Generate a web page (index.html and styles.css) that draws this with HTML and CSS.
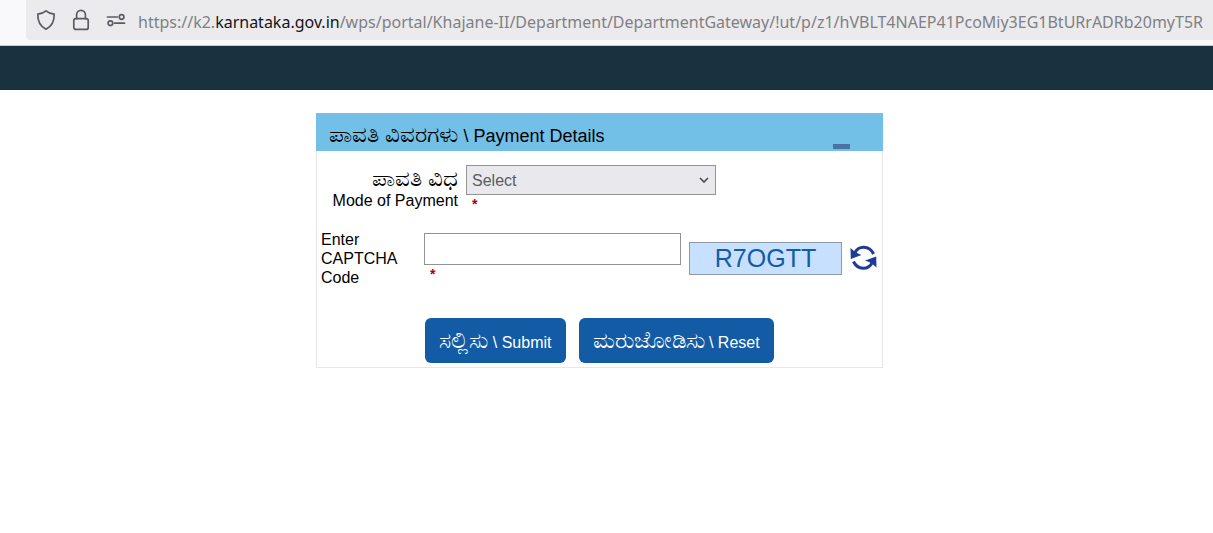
FILE: index.html
```
<!DOCTYPE html>
<html lang="kn">
<head>
  <meta charset="UTF-8">
  <meta name="viewport" content="width=device-width, initial-scale=1.0">
  <title>Khajane-II</title>
  <link rel="stylesheet" href="styles.css">
</head>
<body>
  <div class="toolbar">
    <div class="urlbar">
      <svg class="icon" viewBox="0 0 20 22">
        <path d="M10 1.8 C7.6 3.8 4.8 4.8 1.8 5.2 C1.6 11.8 4.6 17.4 10 20.2 C15.4 17.4 18.4 11.8 18.2 5.2 C15.2 4.8 12.4 3.8 10 1.8 Z"/>
      </svg>
      <svg class="icon" viewBox="0 0 20 22">
        <rect x="2.8" y="9.6" width="14.4" height="10.8" rx="2"/>
        <path d="M5.6 9.6 V5.8 A4.4 4.4 0 0 1 14.4 5.8 V9.6"/>
      </svg>
      <svg class="icon" viewBox="0 0 20 22">
        <path d="M1.5 8 H11.5 M8.5 14.2 H18.5"/>
        <circle cx="15.6" cy="8" r="2.3"/>
        <circle cx="4.4" cy="14.2" r="2.3"/>
      </svg>
      <div class="url">https://k2.<span class="domain">karnataka.gov.in</span>/wps/portal/Khajane-II/Department/DepartmentGateway/!ut/p/z1/hVBLT4NAEP41PcoMiy3EG1BtURrADRb20myT5R</div>
    </div>
  </div>
  <div class="banner"></div>

  <main class="content">
    <form class="panel">
      <div class="panel-header">
        <h2><span class="kn">ಪಾವತಿ ವಿವರಗಳು</span> \ Payment Details</h2>
        <button type="button" class="collapse" aria-label="Collapse"></button>
      </div>
      <div class="row">
        <label class="mode-label" for="mode"><span class="kn">ಪಾವತಿ ವಿಧ</span><br>Mode of Payment</label>
        <div class="field">
          <div class="select-box">
            <select id="mode">
              <option>Select</option>
            </select>
            <svg class="chevron" viewBox="0 0 10 6"><path d="M1 1 L5 5 L9 1"/></svg>
          </div>
          <span class="required">*</span>
        </div>
      </div>
      <div class="row captcha-row">
        <label class="captcha-label" for="captcha">Enter CAPTCHA Code</label>
        <div class="field captcha-field">
          <input type="text" id="captcha">
          <span class="required">*</span>
        </div>
        <div class="captcha-code">R7OGTT</div>
        <button type="button" class="refresh" aria-label="Refresh">
          <svg viewBox="0 0 27 26">
            <path class="arc" d="M5 7.5 C8.5 0.8 19 -0.2 23.6 9"/>
            <path class="arc" d="M22 18 C18.5 24.7 8 25.7 3.4 16.5"/>
            <path class="head" d="M0.5 3 L0.8 14 L11.5 10 L8 8.4 L4 6 Z"/>
            <path class="head" d="M26.5 22.5 L26.2 11.5 L15 15.5 L19 17.1 L23 19.5 Z"/>
          </svg>
        </button>
      </div>
      <div class="actions">
        <button type="submit" class="btn"><span class="kn">ಸಲ್ಲಿಸು</span> \ Submit</button>
        <button type="reset" class="btn"><span class="kn">ಮರುಜೋಡಿಸು</span> \ Reset</button>
      </div>
    </form>
  </main>
</body>
</html>
```

FILE: styles.css
```
* {
  margin: 0;
  padding: 0;
  box-sizing: border-box;
}
body {
  background: #fff;
  color: #000;
  font-family: "Liberation Sans", Arial, "Noto Sans", sans-serif;
  font-size: 16px;
}
.kn {
  font-size: 23px;
  line-height: 0;
}
.toolbar {
  padding: 0 0 5px 26px;
  background: #f9f9fb;
  border-bottom: 1px solid #c9c9d0;
}
.urlbar {
  display: flex;
  align-items: center;
  gap: 15px;
  height: 40px;
  padding-left: 10px;
  background: #ebebed;
  border-radius: 0 0 0 4px;
  overflow: hidden;
}
.icon {
  flex: none;
  width: 20px;
  height: 22px;
  fill: none;
  stroke: #5b5b66;
  stroke-width: 1.7;
  stroke-linejoin: round;
  stroke-linecap: round;
}
.url {
  margin-left: -3px;
  padding-top: 4px;
  color: #808084;
  font-family: "Noto Sans", "Open Sans", sans-serif;
  font-size: 16px;
  white-space: nowrap;
}
.domain {
  color: #15141a;
}
.banner {
  height: 44px;
  background: #18323f;
}
.content {
  padding: 23px 14px 0 0;
}
.panel {
  max-width: 567px;
  margin: 0 auto;
  padding-bottom: 4px;
  border: 1px solid #e7e7e7;
  border-top: none;
}
.panel-header {
  display: flex;
  justify-content: space-between;
  align-items: flex-end;
  height: 38px;
  margin: 0 -1px;
  padding: 0 33px 2px 13px;
  background: #72c0e8;
}
.panel-header h2 {
  padding-bottom: 3px;
  font-size: 18px;
  font-weight: normal;
  line-height: 20px;
}
.collapse {
  width: 17px;
  height: 5px;
  border: none;
  background: #4a72a8;
}
.row {
  display: flex;
  padding: 14px 5px 0 4px;
}
.mode-label {
  width: 137px;
  margin-right: 8px;
  padding-top: 6px;
  text-align: right;
  line-height: 20px;
}
.field {
  display: flex;
  flex-direction: column;
}
.select-box {
  position: relative;
  width: 250px;
}
.select-box select {
  display: block;
  width: 100%;
  height: 30px;
  padding: 0 5px;
  border: 1px solid #939393;
  border-radius: 0;
  background: #e9e9ed;
  color: #5b5b5f;
  font: inherit;
  appearance: none;
}
.chevron {
  position: absolute;
  top: 12px;
  right: 7px;
  width: 10px;
  height: 6px;
  fill: none;
  stroke: #4a4a4f;
  stroke-width: 1.6;
  pointer-events: none;
}
.required {
  padding-left: 6px;
  color: #b00000;
  font-size: 14px;
  font-weight: bold;
  line-height: 18px;
}
.captcha-row {
  padding-top: 17px;
}
.captcha-label {
  width: 88px;
  margin-right: 15px;
  padding-right: 8px;
  line-height: 19px;
}
.captcha-field {
  flex: 1;
  padding-top: 3px;
}
.captcha-field input {
  width: 100%;
  height: 32px;
  padding: 0 6px;
  border: 1px solid #939393;
  font: inherit;
}
.captcha-code {
  width: 153px;
  height: 33px;
  margin: 12px 8px 0;
  border: 1px solid #8f9aa8;
  background: #c6e0fe;
  color: #145ba6;
  font-size: 25px;
  line-height: 31px;
  text-align: center;
}
.refresh {
  width: 27px;
  height: 26px;
  margin-top: 15px;
  border: none;
  background: none;
}
.refresh svg {
  display: block;
}
.arc {
  fill: none;
  stroke: #1f3b97;
  stroke-width: 3;
}
.head {
  fill: #1f3b97;
}
.actions {
  display: flex;
  justify-content: center;
  gap: 13px;
  margin-top: 31px;
}
.btn {
  height: 45px;
  padding: 4px 14px 0;
  border: none;
  border-radius: 6px;
  background: #145ba6;
  color: #fff;
  font: inherit;
  cursor: pointer;
}
```
